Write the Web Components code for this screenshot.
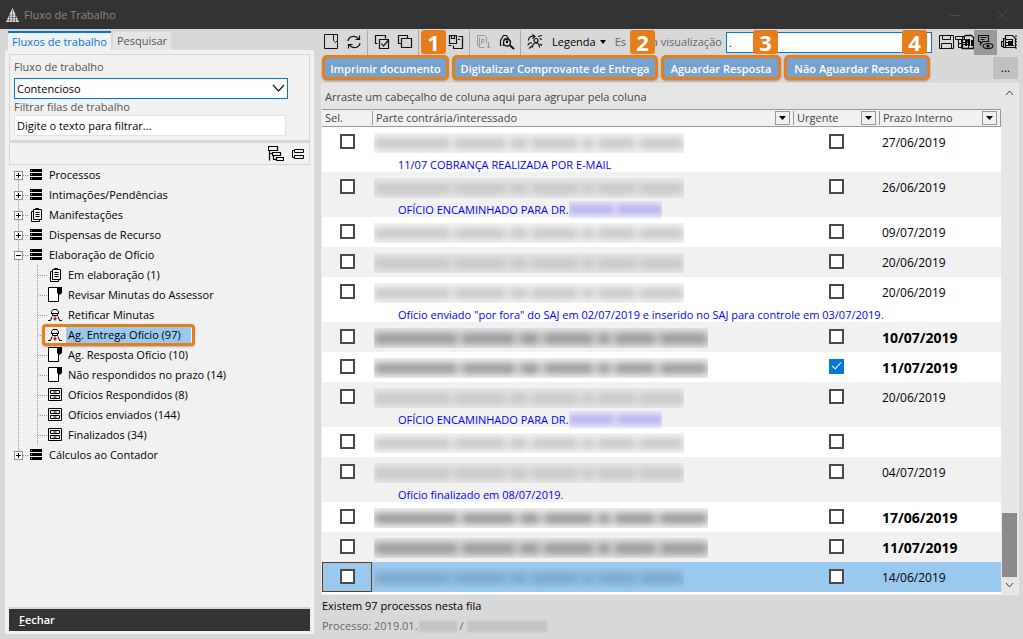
<!DOCTYPE html>
<html lang="pt-BR">
<head>
<meta charset="utf-8">
<title>Fluxo de Trabalho</title>
<style>
html,body{margin:0;height:100%}
body{font:11px/16px "Open Sans","Noto Sans",sans-serif;color:#000;background:#d8d8d8}
</style>
</head>
<body>
<flow-window></flow-window>
<script>
const ICONS = {
  doc: '<path d="M1.5 .5h13v14h-13z" fill="none" stroke="currentColor"/><path d="M10.5 .5v6l2 2 2-2v-6" fill="none" stroke="currentColor"/>',
  refresh: '<path d="M2 7C2.500 3 7 1 11 3.500L13 5.500M13.500 1.500v4h-4M14 9c-.5 4-5 6-9 3.500L3 10.500M2.500 14.500v-4h4" fill="none" stroke="currentColor" stroke-width="1.200"/>',
  copycheck: '<path d="M3.500 9.500h-2v-8h10v3M5.500 5.500h9v9h-9zM7.500 9.500l2 2.500 5-6" fill="none" stroke="currentColor" stroke-width="1.200"/>',
  copy: '<path d="M4.500 9.500h-3v-8h9v3M4.500 4.500h10v9h-10z" fill="none" stroke="currentColor" stroke-width="1.200"/>',
  savecopy: '<path d="M3.500 11.500h-3M1.500 1.500h7v8h-7zM3.500 1.500v3h3v-3M10.500 2.500h4v12h-9v-3M10 5.500h2" fill="none" stroke="currentColor" stroke-width="1.200"/>',
  pdf: '<path d="M3.500 11.500h-2v-10h7l2 2v6M3.500 3.500v10h5M5.500 10V5.500h2.500v2.500h-2.500M12.500 8v6M10.500 12l2 2 2-2" fill="none" stroke="#999"/>',
  search: '<path d="M2.500 11.500h-1v-5l3-5h3l3 5v1M4.500 6.500l2-2 2 2M4.500 12V9" fill="none" stroke="currentColor" stroke-width="1.200"/><circle cx="8" cy="8.500" r="3.500" fill="none" stroke="currentColor" stroke-width="1.300"/><path d="M10.500 11l4.500 4" stroke="currentColor" stroke-width="2"/><circle cx="8" cy="8" r="1.200"/>',
  people: '<circle cx="9" cy="6.500" r="2" fill="none" stroke="currentColor" stroke-width="1.200"/><path d="M5.500 13.500c0-6 7-6 7 0M1.500 6.500c0-3.500 3-5 6-4M5.500 .5l2.500 2-2.500 2M1 11.500c0-2 2-3 4-2.500M11 2.500l4-1M12.500 4.500l2.500 1M2 14.500l3-2.500M13 10l2 1.500" fill="none" stroke="currentColor" stroke-width="1.200"/>',
  save: '<path d="M.5 1.500h14v13h-14zM3.500 1.500v4h8v-4M2.500 14.500v-5h10v5" fill="none" stroke="currentColor"/>',
  grids: '<path d="M0.500 2.500h9v3h-9zM3.500 5.500v8h4M3.500 9.500h4M6.500 5.500h6v3h-6zM6.500 10.500h7v4h-7z" fill="none" stroke="currentColor"/>',
  columns: '<path d="M.5 3.500l3-2h6l2 2v11H.5z" fill="none" stroke="currentColor" stroke-width="1.300"/><path d="M3 6h2v6H3zM6 5h2v7H6zM9 6h2v6H9z"/>',
  chat: '<path d="M.5 1.500h10v6h-6l-2 3v-3h-2zM2.500 3.500h6M2.500 5.500h4" fill="none" stroke="currentColor" stroke-width="1.200"/><ellipse cx="10" cy="12" rx="5" ry="2.500" fill="none" stroke="currentColor" stroke-width="1.200"/><circle cx="10" cy="12" r="1.600"/>',
  sheets: '<path d="M4.500 1.500h7l3 3v9h-10zM4.500 4.500h-2v9h2M2.500 7.500h-2v5h2M4.500 5.500h7v3h-7M4 11.500h9M14 2h2M15 5h1M15 8h1M15 11h1M14 14h2" fill="none" stroke="currentColor" stroke-width="1.200"/><path d="M7 7h5v4H7z"/>',
  stack: '<path d="M2 2h12v3H2zM2 6h12v3H2zM2 10h12v3H2z"/><path d="M3 3.500h1M3 7.500h1M3 11.500h1" stroke="#bbb"/>',
  papers: '<path d="M5.500 4.500h-2v10h8v-2M6.500 2.500h4v-1h-3v1M5.500 2.500h8v10h-8zM7.500 5.500h4M7.500 7.500h4M7.500 9.500h4" fill="none" stroke="currentColor"/>',
  note: '<path d="M1.500 .5h10v14h-10z" fill="#fff" stroke="currentColor"/><path d="M10 0h5v6l-2.500 2L10 6z"/>',
  person: '<path d="M4.500 6.500v-2l1.500-2h4l1.500 2v2M4 6.500h8M5.500 6.500v2h5v-2M5 9.500L3.500 13.500H1M11 9.500l1.500 4H15" fill="none" stroke="currentColor"/><path d="M7.500 9h1v2H10l-2 3-2-3h1.500z" fill="#d00000"/>',
  drawers: '<path d="M1.500 1.500h13v12h-13zM3.500 3.500h9v3h-9zM3.500 8.500h9v3h-9z" fill="none" stroke="currentColor"/><path d="M6.500 5h3M6.500 10h3" stroke="currentColor" stroke-width="1"/>',
  expand: '<path d="M.5 .5h9v4h-9zM4.500 6.500h8v3h-8zM8.500 11.500h7v3h-7zM1.500 4.500v10M1.500 7.500h3M5.500 9.500v4h3" fill="none" stroke="currentColor" stroke-width="1.200"/>',
  collapse: '<path d="M4.500 3.500h9v3h-9zM4.500 9.500h9v3h-9zM4.500 4.500h-2v7h2" fill="none" stroke="currentColor"/>'
};
const svg = n => `<svg width="16" height="16" viewBox="0 0 16 16" aria-hidden="true">${ICONS[n]}</svg>`;

function define(name, html, setup) {
  const t = document.createElement('template');
  t.innerHTML = html;
  customElements.define(name, class extends HTMLElement {
    constructor() {
      super();
      this.attachShadow({mode:'open'}).append(t.content.cloneNode(true));
    }
    connectedCallback() { if (setup && !this.ready) { this.ready = true; setup(this, this.shadowRoot); } }
  });
}

define('title-bar', `<style>
:host{display:flex;align-items:center;height:29px;background:#333;color:#8a8a8a;padding:0 6px;gap:5px}
h1{font:11px/16px "Open Sans",sans-serif;margin:0;flex:1}
button{border:0;background:none;padding:0;width:46px;height:29px;color:#4c4c4c;display:grid;place-items:center}
.set{display:flex;margin-right:-8px}
</style>
<svg width="13" height="14" viewBox="0 0 13 14"><path d="M6.500 0L13 14H0z" fill="#e6e6e6"/><path d="M6.500 2v12M3.500 6v8M9.500 6v8M4 7h5M3 9.500h8M1 12h11" stroke="#555" stroke-width=".7"/></svg>
<h1><slot></slot></h1>
<div class="set"><button aria-label="Minimizar"><svg width="12" height="12"><path d="M0 6.500h11" stroke="currentColor"/></svg></button><button aria-label="Sair"><svg width="12" height="12"><path d="M0 0l12 12M12 0L0 12" stroke="currentColor"/></svg></button></div>`);

define('tool-icon', `<style>
:host{display:block;flex:none;width:23px;height:25px}
button{width:100%;height:100%;border:0;background:none;padding:0;display:grid;place-items:center;color:#111}
:host([pressed]) button{background:#999}
:host([narrow]){width:17px}
</style><button type="button"></button>`, (el, r) => {
  const b = r.querySelector('button');
  b.innerHTML = svg(el.getAttribute('name'));
  b.setAttribute('aria-label', el.getAttribute('label'));
});

define('action-button', `<style>
:host{display:block;position:relative}
button{width:100%;height:25px;box-sizing:border-box;border:3px solid #e67e1c;border-radius:5px;background:#74a1cd;color:#fff;font:600 11px/16px "Open Sans",sans-serif;padding:2px 0 0;white-space:nowrap;box-shadow:0 1px 2px #0005}
b{position:absolute;right:3px;bottom:26px;width:25px;height:24px;border-radius:3px;background:#e67e1c;color:#fff;font:700 22px/24px "Open Sans",sans-serif;text-align:center}
</style><button type="button"><slot></slot></button><b></b>`, (el, r) => {
  r.querySelector('b').textContent = el.getAttribute('step');
});

define('tree-node', `<style>
:host{display:block;position:relative}
.row{display:flex;align-items:center;height:20px;box-sizing:border-box;white-space:nowrap}
.box{flex:none;width:9px;height:9px;box-sizing:border-box;border:1px solid #919191;background:linear-gradient(#000,#000) 1px 3px/5px 1px no-repeat,linear-gradient(#000,#000) 3px 1px/1px 5px no-repeat,#fff;padding:0}
:host([open]) .box{background:linear-gradient(#000,#000) 1px 3px/5px 1px no-repeat,#fff}
.dash{flex:none;width:5px;border-top:1px dotted #999}
.icon{display:flex}
svg{flex:none}
.hit{display:flex;align-items:center;height:20px;box-sizing:border-box}
.text{padding-left:5px;line-height:16px}
.kids{margin-left:23px;border-left:1px dotted #999}
:host([leaf]) .box{display:none}
:host([leaf]) .dash{width:9px}
:host([leaf]) .hit{height:22px;padding-right:4px}
:host([leaf]) .text{padding:0 3px 0 2px;margin-left:3px}
:host([selected]) .hit{margin-left:-5px;padding:0 1px 0 2px;border:3px solid #e67e1c;border-radius:4px;background:#f1f1f1;box-shadow:0 1px 2px #0004}
:host([selected]) .text{background:#99c9ef;min-width:120px}
</style>
<div class="row"><button class="box" aria-label="Expandir"></button><span class="dash"></span><span class="hit"><span class="icon"></span><span class="text"></span></span></div>
<div class="kids"><slot></slot></div>`, (el, r) => {
  r.querySelector('.icon').innerHTML = svg(el.getAttribute('icon'));
  r.querySelector('.text').textContent = el.getAttribute('label');
  if (!el.hasAttribute('open')) r.querySelector('.kids').remove();
});

define('queue-panel', `<style>
:host{display:flex;flex-direction:column;min-height:0}
nav{display:flex;align-items:flex-end;height:19px;margin:2px 0 0 3px;gap:2px}
nav button{border:0;font:11px/16px "Open Sans",sans-serif;height:18px;padding:0 4px;background:#e5e5e3;color:#555;white-space:nowrap}
nav button.on{height:19px;background:#f1f1f1;border-top:2px solid #0078d7;color:#0078d7}
.body{flex:1;display:flex;flex-direction:column;background:#f1f1f1;padding:4px 4px 3px}
form{border:1px solid #d6d6d6;border-bottom-width:2px;padding:4px 21px 4px 4px;height:77px;display:block}
label{display:block;line-height:16px;color:#555}
.pick{position:relative;margin:3px 0 0}
select,input{box-sizing:border-box;display:block;width:100%;height:21px;border:1px solid #0078d7;border-radius:0;background:#fff;color:#000;font:11px/16px "Open Sans",sans-serif;padding:0 2px;appearance:none;outline:0}
input{border-color:#e2e2e2;width:calc(100% - 2px)}
input::placeholder{color:#000;opacity:1}
.pick svg{position:absolute;right:3px;top:6px;pointer-events:none}
.tools{display:flex;justify-content:flex-end;gap:6px;height:21px;align-items:center;border:1px solid #d6d6d6;padding-right:3px}
.tools button{border:0;background:none;padding:0;display:flex}
.tree{flex:1;padding:0 0 0 5px}
.wrap{position:relative;display:block}
.wrap::before{content:"";position:absolute;left:4px;top:10px;bottom:10px;border-left:1px dotted #999}
.close{border:0;border-top:2px solid #d6d6d6;background:#333;color:#fff;font:600 11px/16px "Open Sans",sans-serif;height:24px;text-align:left;padding:1px 10px}
</style>
<nav><button class="on">Fluxos de trabalho</button><button>Pesquisar</button></nav>
<div class="body">
<form><label for="flow">Fluxo de trabalho</label>
<div class="pick"><select id="flow"><option>Contencioso</option></select><svg width="13" height="9"><path d="M1 1l5.500 6L12 1" fill="none" stroke="#222" stroke-width="1.300"/></svg></div>
<label for="filter">Filtrar filas de trabalho</label><input id="filter" placeholder="Digite o texto para filtrar..."></form>
<div class="tools"><button aria-label="Expandir tudo">${svg('expand')}</button><button aria-label="Recolher tudo">${svg('collapse')}</button></div>
<div class="tree"><div class="wrap">
<tree-node icon="stack" label="Processos"></tree-node>
<tree-node icon="stack" label="Intimações/Pendências"></tree-node>
<tree-node icon="papers" label="Manifestações"></tree-node>
<tree-node icon="stack" label="Dispensas de Recurso"></tree-node>
<tree-node icon="stack" label="Elaboração de Ofício" open>
<tree-node leaf icon="papers" label="Em elaboração (1)"></tree-node>
<tree-node leaf icon="note" label="Revisar Minutas do Assessor"></tree-node>
<tree-node leaf icon="person" label="Retificar Minutas"></tree-node>
<tree-node leaf selected icon="person" label="Ag. Entrega Ofício (97)"></tree-node>
<tree-node leaf icon="note" label="Ag. Resposta Ofício (10)"></tree-node>
<tree-node leaf icon="note" label="Não respondidos no prazo (14)"></tree-node>
<tree-node leaf icon="drawers" label="Ofícios Respondidos (8)"></tree-node>
<tree-node leaf icon="drawers" label="Ofícios enviados (144)"></tree-node>
<tree-node leaf icon="drawers" label="Finalizados (34)"></tree-node>
</tree-node>
<tree-node icon="stack" label="Cálculos ao Contador"></tree-node>
</div></div>
<button class="close"><u>F</u>echar</button>
</div>`);

define('blurred-name', `<style>
:host{display:flex;gap:3px;width:310px;height:20px;align-items:center;background:#8881;overflow:hidden;--ink:#c4c4c4}
:host([strong]){width:334px;--ink:#929090}
:host([selected]){--ink:#7ca5c6;background:none}
i{height:11px;background:var(--ink);filter:blur(4px);flex:72 1 0}
</style>
<i></i><i style="flex-grow:48"></i><i style="flex-grow:18"></i><i style="flex-grow:44"></i><i style="flex-grow:12"></i><i style="flex-grow:36"></i><i style="flex-grow:42"></i>`);

const ROWS = [
  {d:'27/06/2019', n:'11/07 COBRANÇA REALIZADA POR E-MAIL'},
  {d:'26/06/2019', n:'OFÍCIO ENCAMINHADO PARA DR.', hidden:1},
  {d:'09/07/2019'}, {d:'20/06/2019'},
  {d:'20/06/2019', n:'Ofício enviado "por fora" do SAJ em 02/07/2019 e inserido no SAJ para controle em 03/07/2019.'},
  {d:'10/07/2019', b:1}, {d:'11/07/2019', b:1, u:1},
  {d:'20/06/2019', n:'OFÍCIO ENCAMINHADO PARA DR.', hidden:1},
  {d:''}, {d:'04/07/2019', n:'Ofício finalizado em 08/07/2019.'},
  {d:'17/06/2019', b:1}, {d:'11/07/2019', b:1}, {d:'14/06/2019', s:1}
];

define('process-grid', `<style>
:host{display:flex;border:1px solid #ececec;background:#fff;min-height:0}
.main{flex:1;min-width:0}
.group{height:25px;box-sizing:border-box;background:#e5e5e3;color:#444;padding:5px 3px 4px}
table{border-collapse:separate;border-spacing:0;width:100%;table-layout:fixed}
th{height:18px;box-sizing:border-box;padding:0;background:#f1f1f1;border:solid #999;border-width:1px 0;font-weight:400;text-align:left;color:#444}
th:last-child{border-right-width:1px}
th div{display:flex;align-items:center;justify-content:space-between;height:14px;padding:0 3px;line-height:14px;border-left:1px solid #999}
th:first-child div{border:0}
th button{width:15px;height:14px;padding:0;border:1px solid #999;background:#f1f1f1;display:grid;place-items:center}
td{padding:0;vertical-align:top;height:30px}
.note td{height:45px}
tr:nth-child(even) td{background:#f1f1f1}
tbody tr.sel td{background:#99c9ef}
tr.sel td:first-child{outline:1px solid #6b3a12;outline-offset:-1px}
input{appearance:none;display:block;box-sizing:border-box;width:15px;height:15px;border:2px solid #4a4a4a;background:#fff;margin:7px auto 0 18px}
input.u{margin-left:36px}
input:checked{background:#0078d7;border-color:#0078d7;position:relative}
input:checked::after{content:"";position:absolute;left:3px;top:-1px;width:4px;height:8px;box-sizing:content-box;border:solid #fff;border-width:0 1px 1px 0;rotate:42deg}
blurred-name{margin:6px 0 0 2px}
p{display:flex;align-items:center;margin:4px 0 0 26px;height:15px;line-height:15px;color:#00f;white-space:nowrap}
.mask{display:flex;align-items:center;gap:3px;width:93px;height:18px;margin:-2px 0;background:#8888ff18;overflow:hidden}
.mask i{flex:1;height:9px;background:#b5b0f4;filter:blur(3px)}
.date{font-size:12px;padding:8px 0 0 3px;line-height:16px}
.b .date{font-size:14px;font-weight:700}
.bar{flex:none;width:17px;background:#e6e6e6;display:flex;flex-direction:column;align-items:center}
.bar svg{margin:5px 0;flex:none}
.space{flex:1}
.thumb{width:15px;height:64px;background:#8b8b8b}
</style>
<div class="main"><div class="group">Arraste um cabeçalho de coluna aqui para agrupar pela coluna</div>
<table><colgroup><col style="width:50px"><col><col style="width:86px"><col style="width:122px"></colgroup>
<thead><tr><th><div>Sel.</div></th><th><div>Parte contrária/interessado<button aria-label="Filtrar"></button></div></th><th><div>Urgente<button aria-label="Filtrar"></button></div></th><th><div>Prazo Interno<button aria-label="Filtrar"></button></div></th></tr></thead><tbody></tbody></table></div>
<div class="bar"><svg width="9" height="7"><path d="M1 6l3.500-4L8 6" fill="none" stroke="#444"/></svg><div class="space"></div><div class="thumb"></div><svg width="9" height="7"><path d="M1 1l3.500 4L8 1" fill="none" stroke="#444"/></svg></div>`, (el, r) => {
  r.querySelectorAll('th button').forEach(b => b.innerHTML = '<svg width="7" height="4"><path d="M0 0h7L3.500 4z"/></svg>');
  r.querySelector('tbody').innerHTML = ROWS.map(o => `<tr class="${o.n?'note ':''}${o.b?'b ':''}${o.s?'sel':''}"><td><input type="checkbox" aria-label="Selecionar"></td><td><blurred-name ${o.b?'strong':''} ${o.s?'selected':''}></blurred-name>${o.n?`<p>${o.n}${o.hidden?'<span class="mask"><i></i><i></i></span>':''}</p>`:''}</td><td><input class="u" type="checkbox" aria-label="Urgente" ${o.u?'checked':''}></td><td><div class="date">${o.d}</div></td></tr>`).join('');
});

define('work-area', `<style>
:host{display:flex;flex-direction:column;min-width:0}
.tools{display:flex;align-items:center;height:26px;margin-left:-2px}
.sep{flex:none;width:5px;height:25px;background:linear-gradient(#aaa,#aaa) 2px 0/1px 100% no-repeat}
.legend{border:0;background:none;font:11px/16px "Open Sans",sans-serif;padding:0;margin:0 9px 0 6px;display:flex;align-items:center;gap:4px}
label{color:#666;white-space:nowrap;width:111px;font-size:11px}
.under{visibility:hidden}
.view{flex:1;min-width:0;height:21px;box-sizing:border-box;border:1px solid #0078d7;background:#fff;padding:0 2px;font:11px/16px "Open Sans",sans-serif;margin-right:6px}
.right{display:flex;margin-right:-1px}
.actions{display:grid;grid-template-columns:127px 206px 120px 146px 1fr;gap:3px;padding-left:1px;height:25px}
.more{justify-self:end;width:25px;height:22px;margin:2px 1px 0 0;border:0;background:#c0c0c0;color:#303;font:12px/16px "Open Sans",sans-serif;padding:0}
process-grid{flex:1;margin-top:3px}
footer{height:44px;box-sizing:border-box;padding:3px 0 0 1px}
footer p{margin:0;line-height:16px}
footer p+p{display:flex;margin-top:4px;color:#666;gap:3px;align-items:center}
.m{height:11px;width:38px;background:#c4c4c4;filter:blur(1px);margin-left:-2px}
.m.w{width:80px;margin:0}
</style>
<div class="tools">
<tool-icon name="doc" label="Novo"></tool-icon><tool-icon name="refresh" label="Atualizar"></tool-icon><span class="sep"></span>
<tool-icon name="copycheck" label="Selecionar todos"></tool-icon><tool-icon name="copy" label="Copiar"></tool-icon><span class="sep"></span>
<tool-icon name="copy" label="Abrir"></tool-icon><tool-icon name="savecopy" label="Salvar cópia"></tool-icon><span class="sep"></span>
<tool-icon name="pdf" label="Exportar"></tool-icon><tool-icon name="search" label="Localizar"></tool-icon><span class="sep"></span>
<tool-icon name="people" label="Encaminhar"></tool-icon>
<button class="legend">Legenda<svg width="6" height="4"><path d="M0 0h6L3 4z"/></svg></button>
<label for="view">Es<span class="under">tilo d</span>a visualização</label><input class="view" id="view" value=".">
<div class="right"><tool-icon narrow name="save" label="Salvar"></tool-icon><tool-icon narrow name="grids" label="Agrupar" style="width:7px"></tool-icon><tool-icon narrow name="columns" label="Colunas" style="width:12px"></tool-icon><tool-icon pressed name="chat" label="Observações"></tool-icon><tool-icon name="sheets" label="Relatório"></tool-icon></div>
</div>
<div class="actions"><action-button step="1">Imprimir documento</action-button><action-button step="2">Digitalizar Comprovante de Entrega</action-button><action-button step="3">Aguardar Resposta</action-button><action-button step="4">Não Aguardar Resposta</action-button><button class="more">...</button></div>
<process-grid></process-grid>
<footer><p>Existem 97 processos nesta fila</p><p>Processo: 2019.01.<span class="m"></span>/<span class="m w"></span></p></footer>`);

define('flow-window', `<style>
:host{display:flex;flex-direction:column;min-height:100vh;background:#d8d8d8}
main{flex:1;display:grid;grid-template-columns:309px minmax(0,1fr);gap:7px;padding:0 4px 0 5px}
queue-panel{padding-bottom:5px}
</style><title-bar>Fluxo de Trabalho</title-bar><main><queue-panel></queue-panel><work-area></work-area></main>`);
</script>
</body>
</html>
